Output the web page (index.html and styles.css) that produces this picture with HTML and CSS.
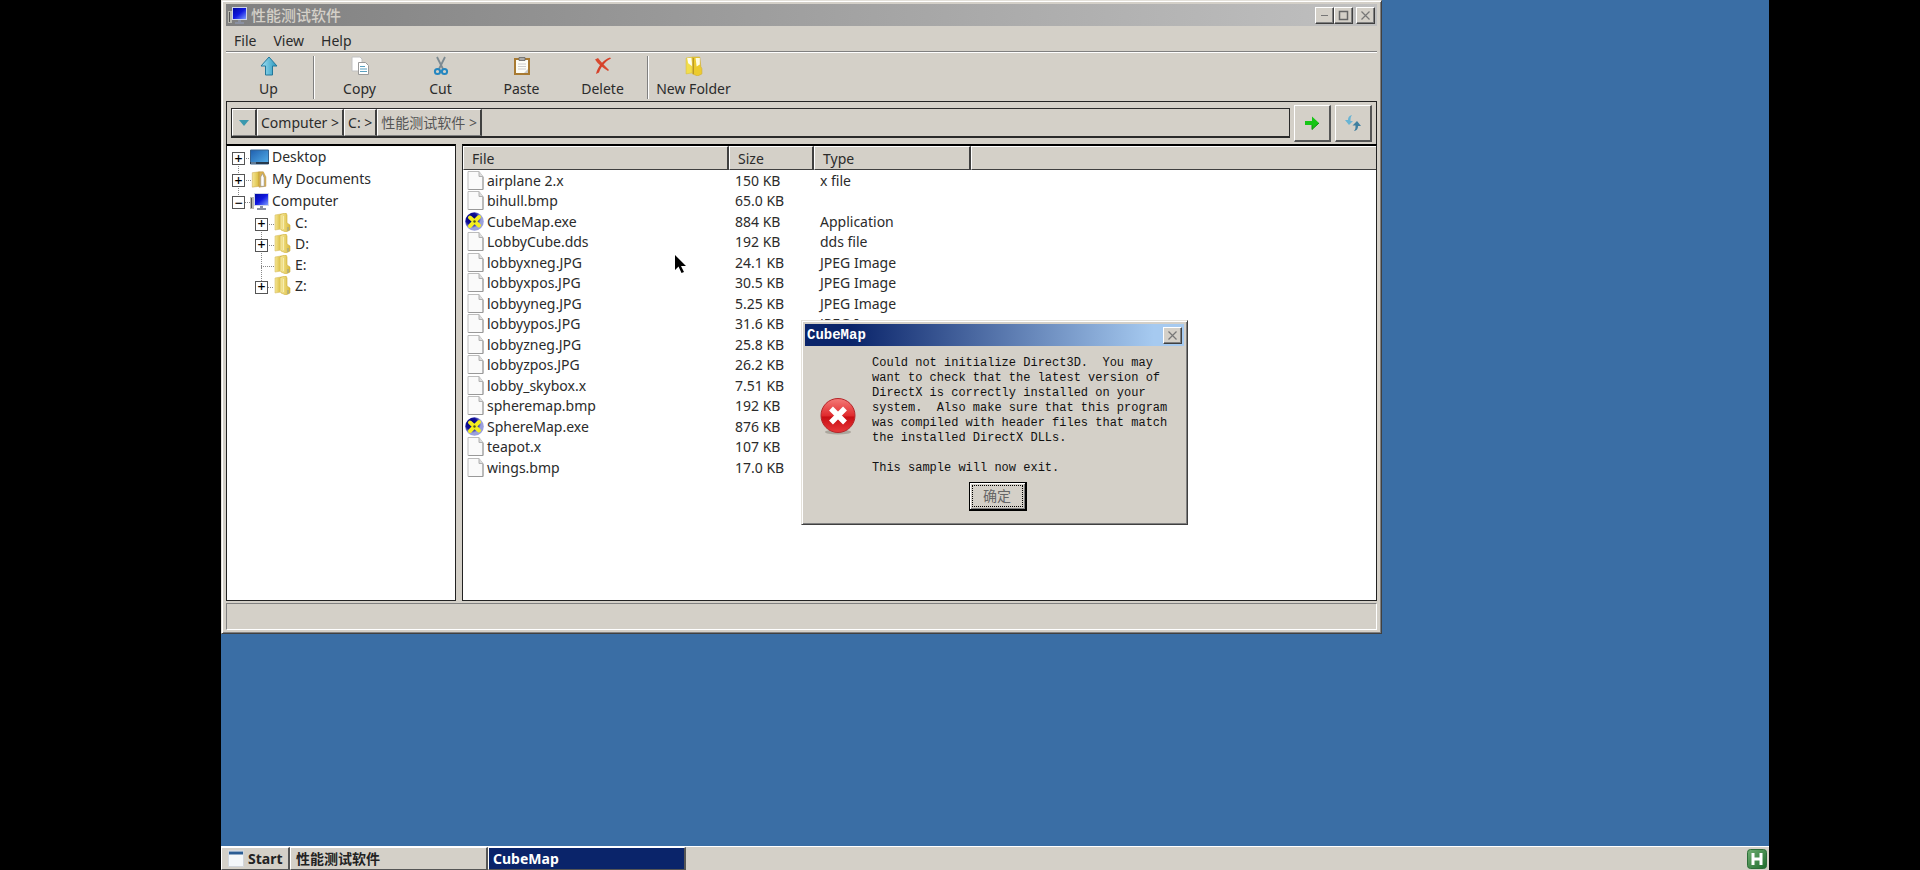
FILE: index.html
```html
<!DOCTYPE html>
<html lang="zh-CN">
<head>
<meta charset="utf-8">
<title>性能测试软件</title>
<link rel="stylesheet" href="styles.css">
</head>
<body>
<svg class="defs" aria-hidden="true">
  <defs>
    <linearGradient id="gFold" x1="0" x2="1"><stop offset="0" stop-color="#f5e695"/><stop offset="1" stop-color="#d9bb3c"/></linearGradient>
    <linearGradient id="gUp" x1="0" x2="1"><stop offset="0" stop-color="#a4e2f4"/><stop offset="1" stop-color="#2796bd"/></linearGradient>
    <linearGradient id="gBlue" x1="0" x2="1" y2="1"><stop offset="0" stop-color="#0008a0"/><stop offset=".5" stop-color="#1018e0"/><stop offset="1" stop-color="#7c9cff"/></linearGradient>
    <linearGradient id="gDesk" x1="0" x2="1" y2="1"><stop offset="0" stop-color="#1f5fae"/><stop offset="1" stop-color="#55b0ea"/></linearGradient>
    <linearGradient id="gErr" x2="0" y2="1"><stop offset="0" stop-color="#f47b78"/><stop offset=".5" stop-color="#e02b2e"/><stop offset=".55" stop-color="#c80f14"/><stop offset="1" stop-color="#e8383a"/></linearGradient>
    <radialGradient id="gBall" cx=".35" cy=".35"><stop offset="0" stop-color="#000070"/><stop offset=".65" stop-color="#10109a"/><stop offset="1" stop-color="#9aa0dc"/></radialGradient>
    <linearGradient id="gTray" x2="1" y2="1"><stop offset="0" stop-color="#6fae72"/><stop offset="1" stop-color="#1f6b2c"/></linearGradient>
  </defs>
  <symbol id="folder" viewBox="0 0 17 19"><path d="M1 2 7 1v15l-6 1z" fill="url(#gFold)" stroke="#d8c064" stroke-width=".6"/><path d="M7 1l5-1 1 2v8l3 2v5l-4 2-5-2z" fill="url(#gFold)" stroke="#cfae3a" stroke-width=".6"/><path d="M7 2v14M9.500 3v13" stroke="#f8eeb0" stroke-width="1"/><path d="M14 14v4" stroke="#8f9a9a"/></symbol>
  <symbol id="folder-new" viewBox="0 0 17 19"><path d="M1 2 7 1v15l-6 1z" fill="#f2de4c" stroke="#dcc23c" stroke-width=".6"/><path d="M2 2l4 0 1 8-4-3z" fill="#fffef0"/><path d="M7 1l7 0 1 9 1 2v5l-4 2-5-2z" fill="#eccb2e" stroke="#cfae3a" stroke-width=".6"/><path d="M10 2h4v6l-3 2z" fill="#fffce0"/><path d="M8 2v15" stroke="#b99a28"/></symbol>
  <symbol id="page" viewBox="0 0 16 19"><path d="M.5.5h11l4 5v13H.5z" fill="#fafafa" stroke="#bcbcbc"/><path d="M11.500.5v5h4" fill="#ddd" stroke="#b0b0b0"/><path d="M15.500 6v12.500H1" fill="none" stroke="#999"/></symbol>
  <symbol id="exe" viewBox="0 0 19 19"><circle cx="9.500" cy="9.500" r="9.300" fill="url(#gBall)"/><path d="M5 5.500l9 8M14 5l-9 9" stroke="#f4ee20" stroke-width="4" stroke-linecap="round"/><circle cx="9.500" cy="9.500" r="1.200" fill="#555a10"/></symbol>
  <symbol id="pc" viewBox="0 0 19 17"><path d="M0 4h4v12H0z" fill="#b9b9b0"/><path d="M1.500 5v10" stroke="#555"/><path d="M4 0h15v13H4z" fill="#cfd5e8"/><path d="M5 1h13v11H5z" fill="url(#gBlue)"/><path d="M10 13h3v2h3v2H7v-2h3z" fill="#8a90a0"/></symbol>
</svg>

<main class="desktop">
  <section class="window explorer">
    <header class="titlebar">
      <svg class="app-icon"><use href="#pc"/></svg>
      <h1>性能测试软件</h1>
      <div class="caption">
        <button class="cap" aria-label="Minimize"><svg viewBox="0 0 15 13"><path d="M4 6.500h7" stroke="#777"/></svg></button>
        <button class="cap" aria-label="Maximize"><svg viewBox="0 0 15 13"><path d="M3.500 2.500h8v8h-8z" fill="none" stroke="#666" stroke-width="1.500"/></svg></button>
        <button class="cap close" aria-label="Close"><svg viewBox="0 0 15 13"><path d="M3.500 2.500l8 8M11.500 2.500l-8 8" stroke="#777" stroke-width="1.200"/></svg></button>
      </div>
    </header>
    <nav class="menubar"><button>File</button><button>View</button><button>Help</button></nav>
    <div class="toolbar">
      <button><svg viewBox="0 0 20 20"><path d="M10 1l8 9h-4.500v9h-7v-9H2z" fill="url(#gUp)" stroke="#22779a" stroke-linejoin="round"/></svg>Up</button>
      <i class="sep"></i>
      <button><svg viewBox="0 0 20 20"><path d="M2 1h8l2 2v12H2z" fill="#fff" stroke="#c2c2c2"/><path d="M8.500 6.500h7l3 3v9h-10z" fill="#fff" stroke="#999"/><path d="M10 10.500h5M10 13h7M10 15.500h7" stroke="#5aa0c0" stroke-width="1.200"/></svg>Copy</button>
      <button><svg viewBox="0 0 20 20"><path d="M6 1l6 12M14 1L8 13" stroke="#7c8a92" stroke-width="1.800"/><circle cx="6.500" cy="15.500" r="2.600" fill="none" stroke="#2486c0" stroke-width="2"/><circle cx="13.500" cy="15.500" r="2.600" fill="none" stroke="#2486c0" stroke-width="2"/></svg>Cut</button>
      <button><svg viewBox="0 0 20 20"><path d="M3 3h14v15H3z" fill="#fdfdf6" stroke="#a87a32" stroke-width="2"/><path d="M7 1.500h6v3H7z" fill="#aaa" stroke="#666" stroke-width=".8"/><path d="M6 8h8M6 10.500h8M6 13h8" stroke="#ccc"/><path d="M12 17l4-4v4z" fill="#ccc"/></svg>Paste</button>
      <button><svg viewBox="0 0 20 20"><path d="M2 3.500l3-1.500c3 4 7 8 11 12l-1 1C9 11 5 8 2 3.500z" fill="#d8492f"/><path d="M18 2.500c-6 3-10 8-12 14l-3 1.500C5 10 10 4 17 1.500z" fill="#d6412a"/></svg>Delete</button>
      <i class="sep"></i>
      <button><svg><use href="#folder-new"/></svg>New Folder</button>
    </div>
    <div class="address">
      <div class="path">
        <button class="crumb drop" aria-label="History"><svg viewBox="0 0 10 6"><path d="M0 0h10L5 6z" fill="#3a98ae"/></svg></button>
        <button class="crumb">Computer &gt;</button>
        <button class="crumb">C: &gt;</button>
        <button class="crumb cjk">性能测试软件 &gt;</button>
        <input type="text" aria-label="Path">
      </div>
      <button class="go" aria-label="Go"><svg viewBox="0 0 16 16"><path d="M1 6h7V1.500L15 8l-7 6.500V10H1z" fill="#16c516"/><path d="M8 10v4.500L15 8" fill="none" stroke="#109010"/></svg></button>
      <button class="go" aria-label="Refresh"><svg viewBox="0 0 16 16"><path d="M7 0C4 .5 3 2.500 3 5H0l4 5 4-4H5.500c0-2.500 0-4 1.500-6z" fill="#68b4d4"/><path d="M9 16c3.500-.5 4-3 4-5h3l-4-5-4.500 4.500H10.500c0 2.500 0 4-1.500 5.500z" fill="#3f7f9f"/></svg></button>
    </div>
    <div class="panes">
      <ul class="tree">
        <li><button class="tg">+</button><svg viewBox="0 0 19 16"><path d="M.5.5h18v14H.5z" fill="url(#gDesk)" stroke="#37628e"/><path d="M0 13.500h19" stroke="#26384c" stroke-width="2"/><path d="M1 13.500h5" stroke="#9bd"/></svg>Desktop</li>
        <li><button class="tg">+</button><svg viewBox="0 0 19 20"><path d="M1 2l8-1v17l-8 1z" fill="url(#gFold)" stroke="#c9a545" stroke-width=".6"/><path d="M9 1h5l3 6v11l-8 1z" fill="#dcb452" stroke="#b58b35" stroke-width=".6"/><path d="M11 18V7l2-4 2 5v10z" fill="#fff" stroke="#888" stroke-width=".7"/></svg>My Documents</li>
        <li class="last"><button class="tg">−</button><svg><use href="#pc"/></svg>Computer</li>
        <li class="sub"><button class="tg">+</button><svg><use href="#folder"/></svg>C:</li>
        <li class="sub"><button class="tg">+</button><svg><use href="#folder"/></svg>D:</li>
        <li class="sub"><span class="tg none"></span><svg><use href="#folder"/></svg>E:</li>
        <li class="sub last"><button class="tg">+</button><svg><use href="#folder"/></svg>Z:</li>
      </ul>
      <div class="files">
        <table>
          <thead><tr><th class="c-file">File</th><th class="c-size">Size</th><th class="c-type">Type</th><th></th></tr></thead>
          <tbody>
            <tr><td><svg><use href="#page"/></svg>airplane 2.x</td><td>150 KB</td><td>x file</td><td></td></tr>
            <tr><td><svg><use href="#page"/></svg>bihull.bmp</td><td>65.0 KB</td><td></td><td></td></tr>
            <tr><td><svg class="exe"><use href="#exe"/></svg>CubeMap.exe</td><td>884 KB</td><td>Application</td><td></td></tr>
            <tr><td><svg><use href="#page"/></svg>LobbyCube.dds</td><td>192 KB</td><td>dds file</td><td></td></tr>
            <tr><td><svg><use href="#page"/></svg>lobbyxneg.JPG</td><td>24.1 KB</td><td>JPEG Image</td><td></td></tr>
            <tr><td><svg><use href="#page"/></svg>lobbyxpos.JPG</td><td>30.5 KB</td><td>JPEG Image</td><td></td></tr>
            <tr><td><svg><use href="#page"/></svg>lobbyyneg.JPG</td><td>5.25 KB</td><td>JPEG Image</td><td></td></tr>
            <tr><td><svg><use href="#page"/></svg>lobbyypos.JPG</td><td>31.6 KB</td><td>JPEG Image</td><td></td></tr>
            <tr><td><svg><use href="#page"/></svg>lobbyzneg.JPG</td><td>25.8 KB</td><td></td><td></td></tr>
            <tr><td><svg><use href="#page"/></svg>lobbyzpos.JPG</td><td>26.2 KB</td><td></td><td></td></tr>
            <tr><td><svg><use href="#page"/></svg>lobby_skybox.x</td><td>7.51 KB</td><td></td><td></td></tr>
            <tr><td><svg><use href="#page"/></svg>spheremap.bmp</td><td>192 KB</td><td></td><td></td></tr>
            <tr><td><svg class="exe"><use href="#exe"/></svg>SphereMap.exe</td><td>876 KB</td><td></td><td></td></tr>
            <tr><td><svg><use href="#page"/></svg>teapot.x</td><td>107 KB</td><td></td><td></td></tr>
            <tr><td><svg><use href="#page"/></svg>wings.bmp</td><td>17.0 KB</td><td></td><td></td></tr>
          </tbody>
        </table>
      </div>
    </div>
    <footer class="status"></footer>
  </section>

  <section class="window dialog" role="alertdialog" aria-labelledby="dlg-title">
    <header class="titlebar active">
      <h2 id="dlg-title">CubeMap</h2>
      <button class="cap close" aria-label="Close"><svg viewBox="0 0 15 13"><path d="M3.500 2.500l8 8M11.500 2.500l-8 8" stroke="#777" stroke-width="1.200"/></svg></button>
    </header>
    <div class="message">
      <svg class="error" viewBox="0 0 36 37"><ellipse cx="18" cy="34" rx="13" ry="2.500" fill="#aaa69d"/><circle cx="18" cy="17.500" r="17" fill="url(#gErr)" stroke="#b3262a"/><path d="M11 10.500l14 14M25 10.500l-14 14" stroke="#fff" stroke-width="5.500"/></svg>
      <p>Could not initialize Direct3D.  You may
want to check that the latest version of
DirectX is correctly installed on your
system.  Also make sure that this program
was compiled with header files that match
the installed DirectX DLLs.

This sample will now exit.</p>
    </div>
    <button class="ok"><span>确定</span></button>
  </section>

  <svg class="cursor" viewBox="0 0 11 18"><path d="M0 0v15l3.500-3.500L6.500 18l2.500-1-3-6h5z" fill="#000"/></svg>

  <footer class="taskbar">
    <button class="start"><svg viewBox="0 0 16 18"><path d="M.5.5h15v16H.5z" fill="#f4f7fa" stroke="#d2d6dc"/><path d="M1 3h14" stroke="#2b5c94" stroke-width="3"/></svg>Start</button>
    <button class="task">性能测试软件</button>
    <button class="task on">CubeMap</button>
    <svg class="tray" viewBox="0 0 20 20"><rect x=".5" y=".5" width="19" height="19" rx="3" fill="url(#gTray)" stroke="#2d6e38"/><path d="M6 4v12M14 4v12M6 10h8" stroke="#fff" stroke-width="3"/></svg>
  </footer>
</main>
</body>
</html>
```

FILE: styles.css
```css
* { box-sizing: border-box; }

body {
  margin: 0;
  background: #000;
  color: #2b2b2b;
  font: 14px/20px "Noto Sans", "Noto Sans CJK SC", sans-serif;
}

button {
  font: inherit;
  color: inherit;
  background: none;
  border: 0;
  padding: 0;
}

h1, h2, p, ul { margin: 0; padding: 0; }
.defs { position: absolute; width: 0; height: 0; }

.desktop {
  position: relative;
  display: flex;
  flex-direction: column;
  justify-content: flex-end;
  min-height: 100vh;
  margin: 0 151px 0 221px;
  background: #3a6ea5;
}

.window {
  position: absolute;
  display: flex;
  flex-direction: column;
  background: #d4d0c8;
  border: 1px solid #e4e1da;
  border-right-color: #404040;
  border-bottom-color: #404040;
  box-shadow: inset 1px 1px #fff, inset -1px -1px #808080;
}

/* Title bars */
.explorer { top: 0; left: 0; width: 75%; height: 634px; padding: 3px 4px; }

.titlebar {
  display: flex;
  align-items: center;
  height: 22px;
  padding: 0 2px;
  background: linear-gradient(90deg, #808080, #c0c0c0);
}
.titlebar h1 { flex: 1; font-size: 15px; line-height: 20px; font-weight: 500; color: #d4d0c8; }
.app-icon { width: 19px; height: 17px; margin-right: 4px; }
.caption { display: flex; }
.cap {
  display: flex;
  width: 19px;
  height: 17px;
  padding: 1px;
  background: #d4d0c8;
  border: 1px solid #fff;
  border-right-color: #404040;
  border-bottom-color: #404040;
  box-shadow: inset -1px -1px #808080;
}
.cap svg { width: 15px; height: 13px; }
.caption .close { margin-left: 3px; }

.menubar {
  display: flex;
  gap: 17px;
  height: 26px;
  padding: 4px 8px 0;
  border-bottom: 1px solid #808080;
  box-shadow: 0 1px #fff;
}

/* Toolbar */
.toolbar { display: flex; height: 49px; padding: 4px 2px 2px; }
.toolbar button {
  display: flex;
  flex-direction: column;
  align-items: center;
  justify-content: space-between;
  width: 81px;
}
.toolbar svg { width: 20px; height: 20px; }
.sep {
  width: 2px;
  margin: 0 4px;
  border-left: 1px solid #808080;
  border-right: 1px solid #fff;
}

/* Address bar */
.address {
  display: flex;
  align-items: center;
  gap: 4px;
  height: 43px;
  padding: 0 4px;
  border: 1px solid #222;
  border-bottom: 0;
}
.path { display: flex; flex: 1; height: 30px; border: 1px solid #2a2a2a; border-bottom-width: 2px; }
.path input { flex: 1; min-width: 0; border: 0; padding: 0 4px; background: #d4d0c8; font: inherit; }
.crumb {
  padding: 1px 3px 0;
  white-space: nowrap;
  border: 1px solid #fff;
  border-right: 2px solid #404040;
  border-bottom-color: #808080;
}
.cjk { color: #555; }
.drop { width: 25px; }
.drop svg { display: block; width: 10px; height: 6px; margin: auto; }
.go {
  width: 37px;
  height: 37px;
  border: 1px solid #fff;
  border-right: 2px solid #555;
  border-bottom: 2px solid #555;
}
.go svg { display: block; width: 16px; height: 16px; margin: auto; }

/* Panes */
.panes { display: flex; flex: 1; gap: 6px; }
.tree, .files { background: #fff; border: 1px solid #222; border-top: 2px solid #000; }

.tree { width: 230px; list-style: none; padding: 0 5px; }
.tree li {
  position: relative;
  display: flex;
  align-items: center;
  gap: 3px;
  height: 22px;
}
.tree li::before {
  content: "";
  position: absolute;
  left: 6px;
  top: 12px;
  width: 12px;
  height: 22px;
  border-left: 1px dotted #888;
  border-top: 1px dotted #888;
}
.tree li.last::before { height: 1px; border-left: 0; }
.tree li.sub { height: 21px; padding-left: 23px; }
.tree .sub::before { left: 29px; }
.tree svg { position: relative; width: 19px; height: 17px; }
.tree .sub svg { height: 19px; }
.tg {
  position: relative;
  width: 13px;
  height: 13px;
  margin: 3px 2px 0 0;
  border: 1px solid #555;
  background: #fff;
  color: #000;
  font-size: 14px;
  line-height: 10px;
  font-weight: 500;
}
.none { visibility: hidden; }

.files { flex: 1; }
table { width: 100%; table-layout: fixed; border-collapse: separate; border-spacing: 0; }
th {
  height: 24px;
  padding: 2px 8px 0;
  text-align: left;
  font-weight: 400;
  background: #d4d0c8;
  border: 1px solid #fff;
  border-right: 2px solid #404040;
  border-bottom: 1px solid #404040;
}
th:last-child { border-right: 0; }
.c-file { width: 266px; }
.c-size { width: 85px; }
.c-type { width: 157px; }
td { height: 20px; padding: 0 6px; line-height: 20px; white-space: nowrap; }
tr:nth-child(odd) td { height: 21px; }
td:first-child { padding: 0 4px; }
td svg { width: 17px; height: 19px; margin-right: 3px; vertical-align: top; }
td .exe { width: 19px; margin: 0 3px 0 -2px; }

.status {
  height: 27px;
  margin-top: 2px;
  border: 1px solid #808080;
  border-right-color: #fff;
  border-bottom-color: #fff;
}

/* Message box */
.dialog { top: 320px; left: 580px; width: 25%; height: 205px; padding: 3px; }
.active { background: linear-gradient(90deg, #0a246a 12%, #a6caf0 92%); }
.titlebar h2 {
  flex: 1;
  color: #fff;
  font: 700 14px/20px "Liberation Mono", monospace;
}
.message { display: flex; align-items: center; gap: 16px; padding: 10px 14px 0 15px; }
.error { width: 36px; height: 37px; flex: none; }
.message p {
  color: #111;
  font: 12px/15px "Liberation Mono", monospace;
  white-space: pre;
}
.ok {
  align-self: center;
  width: 58px;
  height: 29px;
  margin: 6px 0 0 6px;
  padding: 2px;
  color: #666;
  border: 1px solid #000;
  border-right-width: 2px;
  border-bottom-width: 2px;
  box-shadow: inset 1px 1px #fff, inset -1px -1px #808080;
}
.ok span { display: block; border: 1px dotted #000; line-height: 20px; }

.cursor { position: absolute; left: 454px; top: 255px; width: 11px; height: 18px; }

/* Taskbar */
.taskbar {
  display: flex;
  align-items: center;
  height: 24px;
  padding-right: 2px;
  background: #d4d0c8;
  border-top: 1px solid #fff;
}
.start, .task {
  height: 23px;
  border: 1px solid #fff;
  border-right: 2px solid #555;
  border-bottom-color: #555;
  color: #222;
  font-weight: 700;
  text-align: left;
}
.start { display: flex; align-items: center; gap: 4px; width: 69px; padding-left: 6px; }
.start svg { width: 16px; height: 18px; }
.task { width: 198px; padding: 0 5px; }
.task.on { padding: 0 4px; background: #0a246a; color: #fff; }
.tray { width: 20px; height: 20px; margin-left: auto; }
```
